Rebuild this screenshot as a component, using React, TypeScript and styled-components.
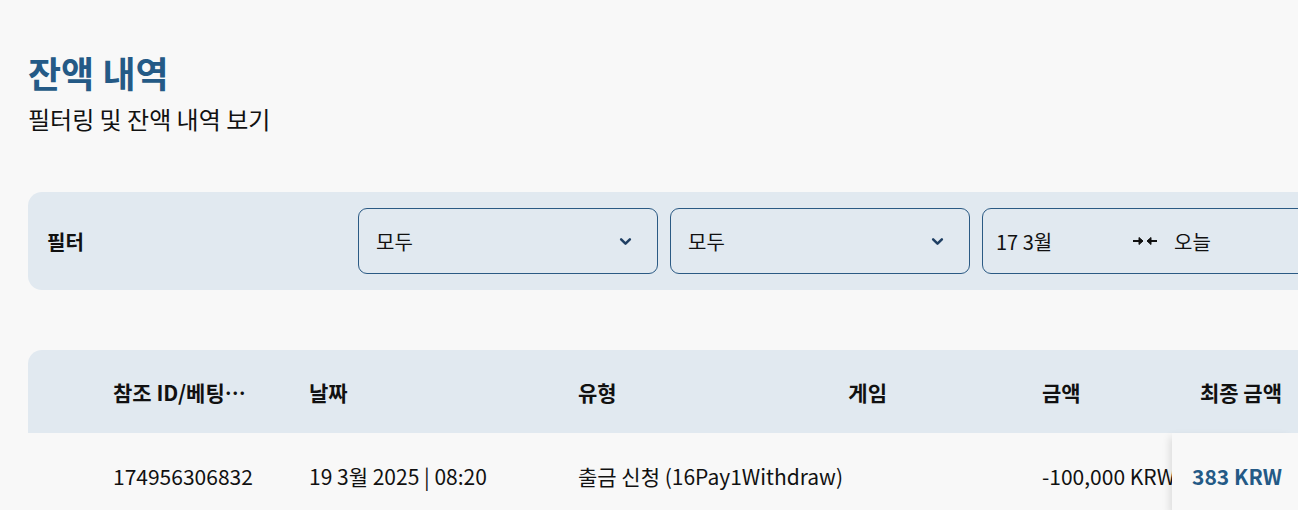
import * as React from "react";
import styled, { createGlobalStyle } from "styled-components";

const GlobalStyle = createGlobalStyle`
  html, body {
    margin: 0;
    padding: 0;
    background: #f8f8f8;
    overflow: hidden;
  }
  body {
    font-family: "Noto Sans CJK KR", "Noto Sans", sans-serif;
    color: #111;
  }
`;

const Page = styled.div`
  padding: 48px 0 0 28px;
  width: 1270px;
`;

const Title = styled.h1`
  margin: 0;
  font-size: 36px;
  font-weight: 700;
  line-height: 48px;
  color: #245a86;
`;

const Subtitle = styled.p`
  margin: 7px 0 0;
  font-size: 24px;
  line-height: 32px;
  color: #111;
`;

const FilterPanel = styled.div`
  margin-top: 57px;
  height: 98px;
  width: 1320px;
  box-sizing: border-box;
  background: #e1e9f0;
  border-radius: 14px;
  display: flex;
  align-items: center;
  padding: 0 0 0 19px;
  gap: 12px;
`;

const FilterLabel = styled.div`
  width: 299px;
  flex-shrink: 0;
  font-size: 20px;
  font-weight: 700;
`;

const Select = styled.div<{ $wide?: boolean }>`
  width: ${(p) => (p.$wide ? "400px" : "300px")};
  height: 66px;
  box-sizing: border-box;
  border: 1px solid #2b5a84;
  border-radius: 9px;
  display: flex;
  align-items: center;
  padding: 0 24px 0 17px;
  font-size: 20px;
  color: #111;
  flex-shrink: 0;
`;

const SelectValue = styled.span`
  flex: 1;
`;

const DateFrom = styled.span`
  width: 136px;
  margin-left: -4px;
`;

const DateTo = styled.span`
  margin-left: 16px;
`;

const TableWrap = styled.div`
  margin-top: 60px;
  width: 1270px;
  overflow: hidden;
  border-radius: 14px 0 0 0;
`;

const Row = styled.div<{ $head?: boolean }>`
  display: flex;
  height: ${(p) => (p.$head ? "83px" : "86px")};
  background: ${(p) => (p.$head ? "#e1e9f0" : "#f8f8f8")};
  align-items: stretch;
`;

const Cell = styled.div<{ $w: number; $right?: boolean; $head?: boolean }>`
  width: ${(p) => p.$w}px;
  flex-shrink: 0;
  box-sizing: border-box;
  padding: 0 16px;
  display: flex;
  align-items: center;
  justify-content: ${(p) => (p.$right ? "flex-end" : "flex-start")};
  font-size: 21px;
  font-weight: ${(p) => (p.$head ? 700 : 400)};
  white-space: nowrap;
  min-width: 0;
`;

const Truncate = styled.span`
  overflow: hidden;
  text-overflow: ellipsis;
  max-width: 136px;
`;

const StickyCell = styled.div<{ $head?: boolean }>`
  flex: 1;
  position: relative;
  z-index: 1;
  display: flex;
  align-items: center;
  justify-content: flex-end;
  padding-right: 16px;
  font-size: 21px;
  font-weight: 700;
  white-space: nowrap;
  background: ${(p) => (p.$head ? "#e1e9f0" : "#f8f8f8")};
  color: ${(p) => (p.$head ? "#111" : "#245a86")};
  box-shadow: ${(p) => (p.$head ? "none" : "-6px 0 8px -4px rgba(0,0,0,0.12)")};
`;

const Chevron = () => (
  <svg width="15" height="15" viewBox="0 0 24 24" fill="none">
    <path d="M5 8.5l7 7 7-7" stroke="#1f3f63" strokeWidth="4" strokeLinecap="round" strokeLinejoin="round" />
  </svg>
);

const ArrowsIn = () => (
  <svg width="26" height="12" viewBox="0 0 26 12" fill="none">
    <path d="M1 6h9" stroke="#111" strokeWidth="2" />
    <path d="M7 2.5l4 3.5-4 3.5z" fill="#111" stroke="#111" strokeWidth="1" strokeLinejoin="round" />
    <path d="M16 6h9" stroke="#111" strokeWidth="2" />
    <path d="M19 2.5l-4 3.5 4 3.5z" fill="#111" stroke="#111" strokeWidth="1" strokeLinejoin="round" />
  </svg>
);

const columns = [
  { key: "pad", w: 69, label: "" },
  { key: "ref", w: 196, label: "참조 ID/베팅 번호" },
  { key: "date", w: 269, label: "날짜" },
  { key: "type", w: 173, label: "유형" },
  { key: "game", w: 168, label: "게임", right: true },
  { key: "gap", w: 123, label: "" },
  { key: "amount", w: 146, label: "금액" },
];

const rows = [
  {
    pad: "",
    ref: "174956306832",
    date: "19 3월 2025 | 08:20",
    type: "출금 신청 (16Pay1Withdraw)",
    game: "",
    gap: "",
    amount: "-100,000 KRW",
    final: "383 KRW",
  },
];

export default function App() {
  return (
    <>
      <GlobalStyle />
      <Page>
        <Title>잔액 내역</Title>
        <Subtitle>필터링 및 잔액 내역 보기</Subtitle>

        <FilterPanel>
          <FilterLabel>필터</FilterLabel>
          <Select>
            <SelectValue>모두</SelectValue>
            <Chevron />
          </Select>
          <Select>
            <SelectValue>모두</SelectValue>
            <Chevron />
          </Select>
          <Select $wide>
            <DateFrom>17 3월</DateFrom>
            <ArrowsIn />
            <DateTo>오늘</DateTo>
          </Select>
        </FilterPanel>

        <TableWrap>
          <Row $head>
            {columns.map((c) => (
              <Cell key={c.key} $w={c.w} $right={c.right} $head>
                {c.key === "ref" ? <Truncate>{c.label}</Truncate> : c.label}
              </Cell>
            ))}
            <StickyCell $head>최종 금액</StickyCell>
          </Row>
          {rows.map((r) => (
            <Row key={r.ref}>
              {columns.map((c) => (
                <Cell key={c.key} $w={c.w} $right={c.right}>
                  {r[c.key as keyof typeof r]}
                </Cell>
              ))}
              <StickyCell>{r.final}</StickyCell>
            </Row>
          ))}
        </TableWrap>
      </Page>
    </>
  );
}
